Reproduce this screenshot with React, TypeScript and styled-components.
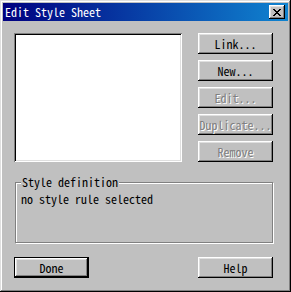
import React from "react";
import styled, { createGlobalStyle } from "styled-components";

const FONT = `"Noto Sans Mono CJK SC", "Liberation Mono", monospace`;

const Global = createGlobalStyle`
  html, body { margin: 0; padding: 0; background: #c0c0c0; }
  * { box-sizing: border-box; }
`;

const Window = styled.div`
  width: 291px;
  height: 292px;
  padding: 3px;
  background: #c0c0c0;
  box-shadow: inset -1px -1px #000, inset 1px 1px #dfdfdf,
    inset -2px -2px #808080, inset 2px 2px #fff;
  display: flex;
  flex-direction: column;
  font-family: ${FONT};
  font-size: 12px;
  font-weight: 400;
  color: #000;
`;

const TitleBar = styled.div`
  height: 18px;
  background: linear-gradient(90deg, #000080, #1084d0);
  display: flex;
  align-items: center;
  justify-content: space-between;
  padding: 0 3px 0 2px;
  color: #fff;
`;

const Title = styled.span`
  line-height: 14px;
  white-space: pre;
`;

const CloseButton = styled.button`
  width: 16px;
  height: 14px;
  padding: 0;
  border: 0;
  background: #c0c0c0;
  box-shadow: inset -1px -1px #000, inset 1px 1px #fff,
    inset -2px -2px #808080, inset 2px 2px #dfdfdf;
  display: flex;
  align-items: center;
  justify-content: center;
`;

const Body = styled.div`
  flex: 1;
  padding: 12px 15px 0 11px;
  display: flex;
  flex-direction: column;
`;

const TopRow = styled.div`
  display: flex;
  gap: 16px;
`;

const ListBox = styled.div`
  width: 168px;
  height: 129px;
  background: #fff;
  box-shadow: inset 1px 1px #808080, inset -1px -1px #fff,
    inset 2px 2px #000, inset -2px -2px #dfdfdf;
`;

const ButtonColumn = styled.div`
  display: flex;
  flex-direction: column;
  gap: 6px;
`;

const Button = styled.button<{ $default?: boolean }>`
  width: 75px;
  height: 21px;
  padding: 0;
  margin: 0;
  background: #c0c0c0;
  font-family: ${FONT};
  font-size: 12px;
  font-weight: 400;
  line-height: 12px;
  color: #000;
  white-space: nowrap;
  overflow: hidden;
  display: flex;
  align-items: center;
  justify-content: center;
  border: ${(p) => (p.$default ? "1px solid #000" : "0")};
  box-shadow: inset -1px -1px #000, inset 1px 1px #fff,
    inset -2px -2px #808080, inset 2px 2px #dfdfdf;
  &:disabled {
    color: #808080;
    text-shadow: 1px 1px 0 #fff;
  }
`;

const GroupBox = styled.div`
  position: relative;
  margin: 20px 0 0 1px;
  width: 258px;
  height: 61px;
  border: 1px solid #808080;
  box-shadow: inset 1px 1px #fff, 1px 1px #fff;
  padding: 10px 0 0 5px;
  line-height: 12px;
`;

const Legend = styled.span`
  position: absolute;
  top: -7px;
  left: 5px;
  padding: 0 1px;
  background: #c0c0c0;
  line-height: 12px;
`;

const BottomRow = styled.div`
  margin-top: 14px;
  display: flex;
  justify-content: space-between;
  width: 259px;
`;

const CloseGlyph = () => (
  <svg width="8" height="7" viewBox="0 0 8 7" shapeRendering="crispEdges">
    <path
      fill="#000"
      d="M0 0h2v1H0zM6 0h2v1H6zM1 1h2v1H1zM5 1h2v1H5zM2 2h4v1H2zM3 3h2v1H3zM2 4h4v1H2zM1 5h2v1H1zM5 5h2v1H5zM0 6h2v1H0zM6 6h2v1H6z"
    />
  </svg>
);

export default function App() {
  return (
    <>
      <Global />
      <Window>
        <TitleBar>
          <Title>Edit Style Sheet</Title>
          <CloseButton aria-label="Close">
            <CloseGlyph />
          </CloseButton>
        </TitleBar>
        <Body>
          <TopRow>
            <ListBox />
            <ButtonColumn>
              <Button>Link...</Button>
              <Button>New...</Button>
              <Button disabled>Edit...</Button>
              <Button disabled>Duplicate...</Button>
              <Button disabled>Remove</Button>
            </ButtonColumn>
          </TopRow>
          <GroupBox>
            <Legend>Style definition</Legend>
            no style rule selected
          </GroupBox>
          <BottomRow>
            <Button $default>Done</Button>
            <Button>Help</Button>
          </BottomRow>
        </Body>
      </Window>
    </>
  );
}
